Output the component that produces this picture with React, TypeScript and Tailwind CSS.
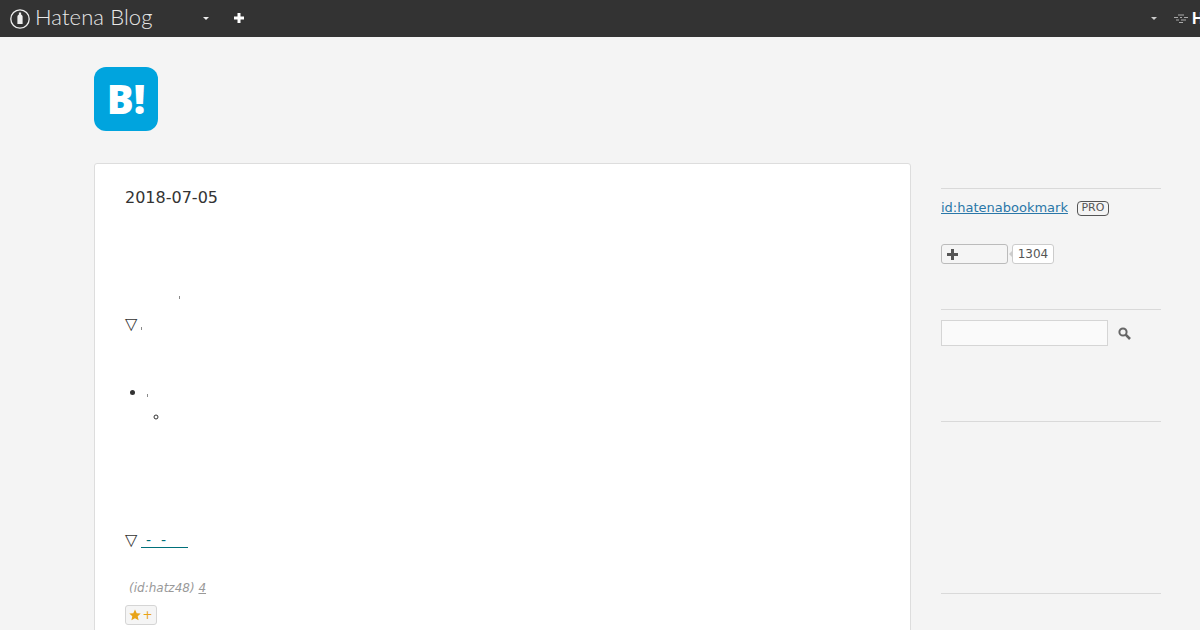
import React from 'react'

const Rule = () => <div className="h-px w-full bg-[#d9d9d9]" />

const Tick = ({ className = '' }: { className?: string }) => (
  <span className={`inline-block h-[3px] w-px bg-[#8a8a8a] ${className}`} />
)

const Header = () => (
  <header className="flex h-[37px] items-center justify-between overflow-hidden bg-[#333333] pl-[10px] text-white">
    <div className="flex items-center">
      <svg width="20" height="20" viewBox="0 0 20 20" fill="none">
        <circle cx="10" cy="10" r="9.200" stroke="#eeeeee" strokeWidth="1.300" />
        <path d="M8.900 3.500h2.200v1.900c1 .6 1.500 1.300 1.500 2.300v7.300H7.400V7.700c0-1 .5-1.700 1.500-2.300z" fill="#eeeeee" />
      </svg>
      <span className="ml-[5px] w-[117px] -translate-y-[2px] font-['Lato'] text-[22px] leading-none font-light tracking-[0.1px] whitespace-nowrap text-[#e8e8e8]">
        Hatena Blog
      </span>
      <span className="ml-[51px] h-0 w-0 border-x-[3px] border-t-[3px] border-x-transparent border-t-[#eeeeee]" />
      <svg className="mb-px ml-[25px]" width="10" height="10" viewBox="0 0 10 10">
        <path d="M3.500 0h3v3.500H10v3H6.500V10h-3V6.500H0v-3h3.500z" fill="#ffffff" />
      </svg>
    </div>
    <div className="flex w-[49px] shrink-0 items-center">
      <span className="h-0 w-0 border-x-[3px] border-t-[3px] border-x-transparent border-t-[#cccccc]" />
      <svg className="ml-[16px] shrink-0" width="16" height="12" viewBox="0 0 16 12">
        <path d="M5 2h6M1 4.500h4M7 4.500h2M11 4.500h4M3 7h3M8 7h5M6 9.500h4" stroke="#aaaaaa" strokeWidth="1" />
      </svg>
      <span className="ml-[3px] font-['Liberation_Sans'] text-[16px] leading-none font-bold">H</span>
    </div>
  </header>
)

const Entry = () => (
  <main className="h-[600px] w-[817px] shrink-0 rounded-[3px] border border-[#dddddd] bg-white pt-[24px] pl-[30px] text-[#333333]">
    <div className="text-[16px] leading-[20px]">2018-07-05</div>
    <div className="mt-[88px] flex h-[14px] pl-[54px]">
      <Tick />
    </div>
    <div className="mt-[4px] flex h-[20px] items-center text-[16px]">
      <span className="w-[16px]">▽</span>
      <Tick className="mt-[8px]" />
    </div>
    <ul className="mt-[47px] ml-[22px] list-disc text-[16px] leading-[24px]">
      <li>
        <Tick className="-translate-y-[1px]" />
        <ul className="ml-[22px] list-[circle] text-[13px]">
          <li className="h-[24px]" />
        </ul>
      </li>
    </ul>
    <div className="mt-[101px] flex h-[20px] items-center text-[16px]">
      <span className="w-[16px]">▽</span>
      <a className="flex h-[16px] w-[47px] items-center gap-[10px] border-b border-[#00707a] pl-[5px] text-[14px] leading-none text-[#00707a]">
        <span>-</span>
        <span>-</span>
      </a>
    </div>
    <div className="mt-[28px] pl-[4px] text-[12px] leading-[20px] text-[#999999] italic">
      (id:hatz48) <span className="underline">4</span>
    </div>
    <button className="mt-[7px] flex h-[20px] w-[32px] items-center justify-center gap-px rounded-[3px] border border-[#d5d5d5] bg-[#f5f5f5]">
      <svg width="12" height="12" viewBox="0 0 12 12">
        <path d="M6 .5l1.700 3.700 4 .4-3 2.700.900 4L6 9.300 2.400 11.300l.900-4-3-2.700 4-.4z" fill="#e8a317" />
      </svg>
      <span className="text-[12px] leading-none text-[#e8a317]">+</span>
    </button>
  </main>
)

const Sidebar = () => (
  <aside className="w-[220px] shrink-0 pt-[25px]">
    <Rule />
    <div className="mt-[12px] flex h-[14px] items-center">
      <a className="text-[13px] text-[#2a77a8] underline">id:hatenabookmark</a>
      <span className="ml-[9px] flex h-[15px] w-[32px] items-center justify-center rounded-[4px] border border-[#555555] text-[11px] text-[#555555]">
        PRO
      </span>
    </div>
    <div className="mt-[29px] flex h-[20px] items-stretch">
      <button className="flex w-[67px] items-center rounded-[3px] border border-[#bbbbbb] bg-[#f5f5f5] pl-[5px]">
        <svg width="11" height="11" viewBox="0 0 11 11">
          <path d="M4 0h3v4h4v3H7v4H4V7H0V4h4z" fill="#555555" />
        </svg>
      </button>
      <span className="relative ml-[4px] flex w-[42px] items-center justify-center rounded-[3px] border border-[#cccccc] bg-white text-[12px] text-[#555555]">
        <span className="absolute top-[6px] -left-[4px] h-0 w-0 border-y-[3px] border-r-[3px] border-y-transparent border-r-[#cccccc]" />
        1304
      </span>
    </div>
    <div className="mt-[45px]">
      <Rule />
    </div>
    <div className="mt-[10px] flex h-[26px] items-center">
      <input className="h-full w-[167px] border border-[#d5d5d5] bg-[#fafafa]" />
      <svg className="ml-[10px]" width="13" height="13" viewBox="0 0 13 13" fill="none">
        <circle cx="5" cy="5" r="3.600" stroke="#666666" strokeWidth="2" />
        <path d="M7.700 7.700l4.300 4.300" stroke="#666666" strokeWidth="2.600" />
      </svg>
    </div>
    <div className="mt-[75px]">
      <Rule />
    </div>
    <div className="mt-[171px]">
      <Rule />
    </div>
  </aside>
)

const App = () => (
  <div className="h-[630px] overflow-hidden bg-[#f4f4f4] font-['DejaVu_Sans',sans-serif]">
    <Header />
    <div className="ml-[94px] w-[1067px]">
      <div className="mt-[30px] flex h-[64px] w-[64px] items-center justify-center rounded-[12px] bg-[#00a4de] font-['Open_Sans',sans-serif] text-[40px] leading-none font-extrabold text-white">
        B!
      </div>
      <div className="mt-[32px] flex gap-[30px]">
        <Entry />
        <Sidebar />
      </div>
    </div>
  </div>
)

export default App
